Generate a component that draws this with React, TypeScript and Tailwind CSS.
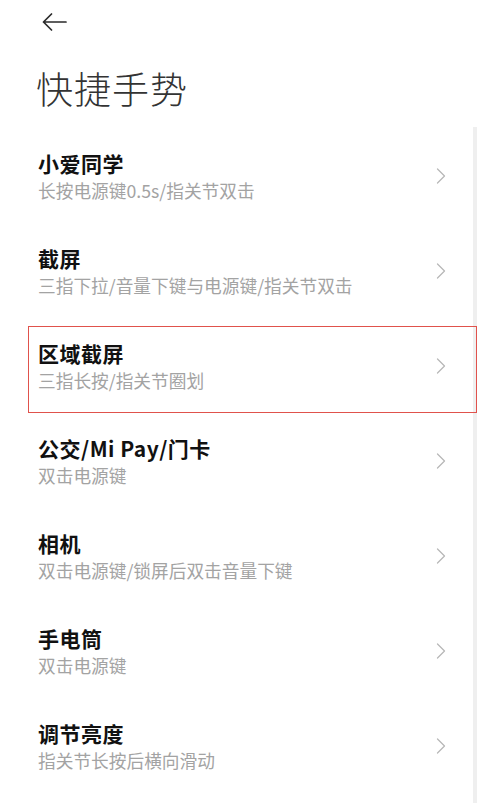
import React from "react";

const items = [
  { title: "小爱同学", sub: "长按电源键0.5s/指关节双击" },
  { title: "截屏", sub: "三指下拉/音量下键与电源键/指关节双击" },
  { title: "区域截屏", sub: "三指长按/指关节圈划", hl: true },
  { title: "公交/Mi Pay/门卡", sub: "双击电源键" },
  { title: "相机", sub: "双击电源键/锁屏后双击音量下键" },
  { title: "手电筒", sub: "双击电源键" },
  { title: "调节亮度", sub: "指关节长按后横向滑动" },
];

function Chevron() {
  return (
    <svg width="10" height="16" viewBox="0 0 10 16" fill="none">
      <path d="M1.5 1 L8.5 8 L1.5 15" stroke="#b8b8b8" strokeWidth="1.3" strokeLinecap="round" strokeLinejoin="round" />
    </svg>
  );
}

export default function App() {
  return (
    <div
      className="relative w-[487px] h-[803px] overflow-hidden bg-white"
      style={{ fontFamily: '"Noto Sans CJK SC", "Noto Sans", sans-serif' }}
    >
      <div className="absolute right-[10px] top-[127px] bottom-0 w-[4px] bg-[#efefef]" />
      <div className="h-[44px] flex items-center pl-[42px]">
        <svg width="25" height="18" viewBox="0 0 25 18" fill="none">
          <path d="M1.5 9 H24 M9.5 1 L1.5 9 L9.5 17" stroke="#2a2a2a" strokeWidth="1.7" strokeLinecap="round" strokeLinejoin="round" />
        </svg>
      </div>
      <div className="h-[84px] flex items-center pl-[36px]">
        <h1 className="text-[37px] leading-[44px] font-light text-[#333] tracking-[1px] mt-[3px]">快捷手势</h1>
      </div>
      <div className="relative flex flex-col">
        {items.map((it) => (
          <div key={it.title} className="relative h-[95px] flex items-center pl-[38px] pr-[41px]">
            <div className="flex-1 flex flex-col">
              <div className="text-[21px] leading-[26px] font-bold text-[#111] tracking-[0.5px]">{it.title}</div>
              <div className="mt-[2px] text-[17.7px] leading-[24px] text-[#a3a3a3]">{it.sub}</div>
            </div>
            <Chevron />
            {it.hl && (
              <div className="absolute left-[28px] right-[10px] top-[8px] bottom-0 border-[1.5px] border-[#e0524c]" />
            )}
          </div>
        ))}
      </div>
    </div>
  );
}
